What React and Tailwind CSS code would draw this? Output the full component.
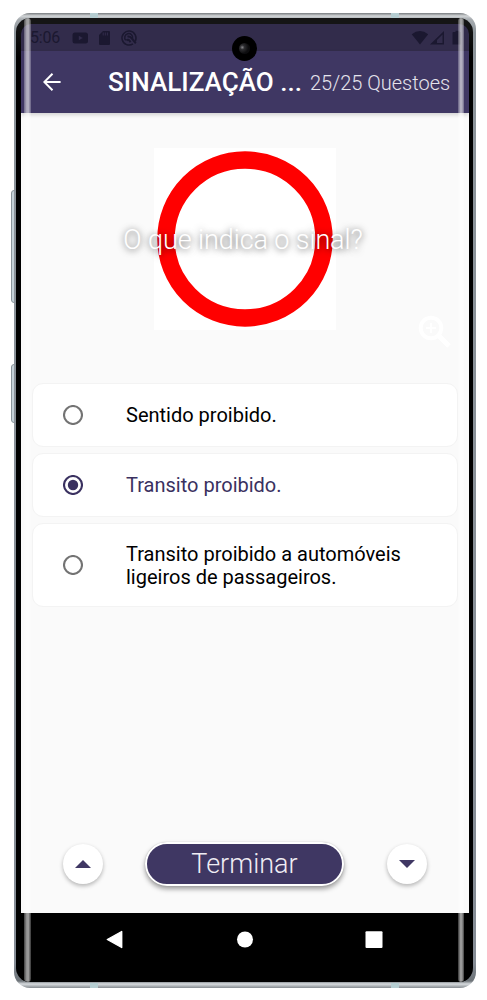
import React from "react";

const options = [
  { lines: ["Sentido proibido."], height: "h-[64px]" },
  { lines: ["Transito proibido."], height: "h-[64px]", selected: true },
  { lines: ["Transito proibido a automóveis", "ligeiros de passageiros."], height: "h-[84px]" },
];

function Radio({ selected }) {
  const color = selected ? "#3a3160" : "#737373";
  return (
    <svg width="20" height="20" viewBox="0 0 20 20" className="mb-px shrink-0">
      <circle cx="10" cy="10" r="9" fill="none" stroke={color} strokeWidth="2.1" />
      {selected && <circle cx="10" cy="10" r="5.2" fill={color} />}
    </svg>
  );
}

function Option({ lines, height, selected }) {
  return (
    <div
      className={`flex items-center rounded-[11px] border border-[#f3f3f3] bg-white pl-[30px] ${height} ${
        selected ? "text-[#3a3160]" : "text-black"
      }`}
    >
      <Radio selected={selected} />
      <div className="ml-[43px] pt-[2px] text-[20px] leading-[23.5px] whitespace-nowrap">
        {lines.map((line) => (
          <div key={line}>{line}</div>
        ))}
      </div>
    </div>
  );
}

function StatusBar() {
  return (
    <div className="flex h-[27px] items-center bg-[#322c4b] pl-[9px] text-[#1b1830]">
      <span className="w-[42px] text-[16px] leading-none tracking-[-0.2px]">5:06</span>
      <svg width="66" height="18" viewBox="0 0 66 18" className="shrink-0">
        <rect x="0.500" y="3.500" width="15.500" height="11" rx="2.500" fill="currentColor" />
        <path d="M6.800 6.700v4.600l4-2.300z" fill="#322c4b" />
        <path d="M31 2h6q1 0 1 1v12q0 1-1 1H28q-1 0-1-1V6z" fill="currentColor" />
        <path d="M31.200 3.500v3M33.300 3.500v3M35.400 3.500v3" stroke="#322c4b" strokeWidth="1" />
        <g fill="none" stroke="currentColor" strokeWidth="1.500">
          <path d="M61 14.800A7 7 0 1 1 63.200 12.300" />
          <path d="M53.800 11.300A4 4 0 1 1 60.600 9.500" />
          <path d="M55.500 7.800q2.500-1 4.500 1.800l3.800 4.800M54.500 11.500q1.500-1.500 3 0.200l1 1.500" strokeWidth="2" />
        </g>
      </svg>
      <svg width="50" height="16" viewBox="0 0 50 16" className="mr-[8px] ml-auto shrink-0">
        <path d="M0.700 4.200Q9 -2 17.200 4.200L9 14.500z" fill="currentColor" />
        <path
          fillRule="evenodd"
          d="M33 1v13.500H19zM31.500 4.500L26 10v3h5.500z"
          fill="currentColor"
        />
        <path d="M42.500 2h2V0.800h4V2h1.500v12.500h-8.500V3q0-1 1-1z" fill="currentColor" />
      </svg>
    </div>
  );
}

function AppBar() {
  return (
    <header className="relative flex h-[62px] items-center bg-[#3f3763] pl-[22px] text-white shadow-[0_2px_4px_rgba(0,0,0,0.16)]">
      <svg width="18" height="18" viewBox="0 0 18 18" className="shrink-0">
        <path d="M17.600 9H1.500M9.500 0.800L1.300 9l8.200 8.200" fill="none" stroke="white" strokeWidth="2" />
      </svg>
      <h1 className="ml-[47px] w-[202px] text-[26px] leading-[30px] font-medium tracking-[0.05px] whitespace-nowrap">
        SINALIZAÇÃO ...
      </h1>
      <span className="pt-px text-[20px] leading-[24px] font-light whitespace-nowrap text-[#e5e3ec]">
        25/25 Questoes
      </span>
    </header>
  );
}

function Question() {
  return (
    <div className="relative flex h-[270px] justify-center pt-[35px]">
      <svg width="182" height="182" viewBox="0 0 182 182" className="bg-white">
        <circle cx="91" cy="91" r="79" fill="none" stroke="#ff0000" strokeWidth="17.500" />
      </svg>
      <p className="absolute top-[110px] left-0 w-[444px] text-center text-[27px] leading-[34px] font-light tracking-[-0.1px] whitespace-nowrap text-white [text-shadow:0_1px_7px_rgba(0,0,0,0.75)]">
        O que indica o sinal?
      </p>
      <svg width="34" height="34" viewBox="0 0 34 34" className="absolute top-[202px] left-[397px]">
        <g fill="none" stroke="white">
          <circle cx="13" cy="13" r="10.300" strokeWidth="3.900" />
          <path d="M20.500 20.500l10.500 10.500" strokeWidth="4.800" />
          <path d="M13 8v10M8 13h10" strokeWidth="2" />
        </g>
      </svg>
    </div>
  );
}

function RoundButton({ down }) {
  return (
    <button className="flex size-10 items-center justify-center rounded-full bg-white shadow-[0_2px_4px_rgba(0,0,0,0.28)]">
      <svg width="16" height="8" viewBox="0 0 16 8">
        <path d={down ? "M0 0h16L8 8z" : "M0 8h16L8 0z"} fill="#3f3763" />
      </svg>
    </button>
  );
}

function NavBar() {
  return (
    <nav className="flex h-[69px] justify-center bg-black pt-[17px]">
      <svg width="290" height="20" viewBox="0 0 290 20" fill="white" stroke="white" strokeLinejoin="round">
        <path d="M7.300 9.500L21.700 1.500v16z" strokeWidth="1.400" />
        <circle cx="145" cy="9.500" r="8" stroke="none" />
        <rect x="265.500" y="1.200" width="17" height="16.800" rx="1" stroke="none" />
      </svg>
    </nav>
  );
}

export default function App() {
  return (
    <div className="relative h-[1000px] w-[487px] overflow-hidden bg-white pt-[13px] pl-[14px] font-['Roboto',sans-serif]">
      <div className="absolute top-[190px] left-[11px] h-[113px] w-[5px] rounded-l-[3px] border border-[#89949b] bg-[#c5d1d8]" />
      <div className="absolute top-[364px] left-[11px] h-[59px] w-[5px] rounded-l-[3px] border border-[#89949b] bg-[#c5d1d8]" />

      <div className="relative h-[975px] w-[462px] rounded-[16px] bg-[linear-gradient(180deg,#777b7e_0,#d3d6d8_3px,#a8adb1_6px,#8c949a_20px,#858c95_950px,#6d7378_968px,#d8dcdf_971px,#858b90_975px)] pt-[5px] pr-[3px] pb-[6px] pl-[2px]">
        <div className="absolute top-0 left-[76px] h-[5px] w-[8px] bg-[#b5cdd1]" />
        <div className="absolute top-0 left-[377px] h-[5px] w-[8px] bg-[#b5cdd1]" />
        <div className="absolute bottom-0 left-[76px] h-[5px] w-[8px] bg-[#b5cdd1]" />
        <div className="absolute bottom-0 left-[377px] h-[5px] w-[8px] bg-[#b5cdd1]" />

        <div className="relative flex h-[964px] flex-col overflow-hidden rounded-[14px] bg-[linear-gradient(180deg,#151515_0,#151515_8px,#000_40px)] pt-[6px] pr-[4px] pl-[5px]">
          <div className="flex flex-1 flex-col overflow-hidden rounded-t-[10px]">
            <StatusBar />
            <AppBar />
            <main className="flex h-[800px] flex-col bg-[#fafafa]">
              <Question />
              <div className="flex flex-col gap-[6px] pr-[11px] pl-[11px]">
                {options.map((option) => (
                  <Option key={option.lines[0]} {...option} />
                ))}
              </div>
              <div className="mt-auto flex items-center justify-between pr-[42px] pb-[27px] pl-[42px]">
                <RoundButton />
                <button className="mr-px flex h-[44px] w-[199px] items-center justify-center rounded-full border-2 border-white bg-[#3f3763] text-[27px] leading-[32px] font-light text-[#efedf4] shadow-[0_3px_5px_rgba(0,0,0,0.38),0_0_1px_rgba(0,0,0,0.3)]">
                  Terminar
                </button>
                <RoundButton down />
              </div>
            </main>
            <NavBar />
          </div>
          <div className="absolute top-0 bottom-0 left-[8px] w-[7px] rounded-[6px] bg-[linear-gradient(90deg,rgba(255,255,255,0.25),rgba(255,255,255,0.6)_40%,rgba(255,255,255,0.6)_65%,rgba(255,255,255,0.2))]" />
          <div className="absolute top-0 right-[9px] bottom-0 w-[6px] rounded-[6px] bg-[linear-gradient(90deg,rgba(255,255,255,0.2),rgba(255,255,255,0.6)_40%,rgba(255,255,255,0.6)_65%,rgba(255,255,255,0.25))]" />
        </div>

        <div className="absolute top-[23px] left-[218px] size-[25px] rounded-full bg-black p-[7px]">
          <div className="size-[11px] rounded-full bg-[radial-gradient(circle_at_30%_40%,#88888c_0,#2d2d30_22%,#0d0d0f_60%)]" />
        </div>
      </div>
    </div>
  );
}
